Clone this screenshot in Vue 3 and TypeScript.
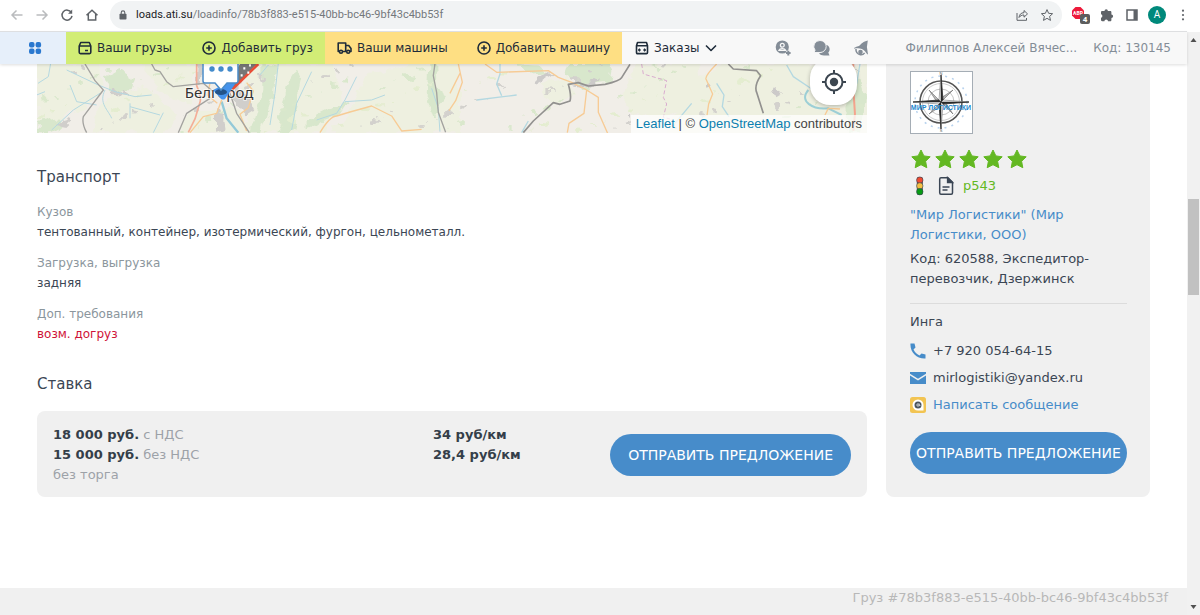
<script setup lang="ts">
import { ref } from 'vue'

interface Detail {
  label: string
  value: string
  alert?: boolean
}

interface Spot {
  x: number
  y: number
  size: number
  color: string
}

const address = ref('loads.ati.su/loadinfo/78b3f883-e515-40bb-bc46-9bf43c4bb53f')
const host = 'loads.ati.su'
const path = '/loadinfo/78b3f883-e515-40bb-bc46-9bf43c4bb53f'

const details: Detail[] = [
  { label: 'Кузов', value: 'тентованный, контейнер, изотермический, фургон, цельнометалл.' },
  { label: 'Загрузка, выгрузка', value: 'задняя' },
  { label: 'Доп. требования', value: 'возм. догруз', alert: true },
]

// Villages and groves scattered over the map
const spotColors = ['#d3d1cd', '#dae8cc', '#e4edd0']
const spots: Spot[] = Array.from({ length: 150 }, (_, i) => ({
  x: (i * 197) % 830,
  y: (i * 43) % 69,
  size: 1 + (i % 4),
  color: spotColors[i % 3],
}))
</script>

<template>
  <div class="window">
    <header class="browser">
      <button class="tool" aria-label="Назад">
        <svg width="14" height="14" viewBox="0 0 14 14" class="line faint"><path d="M12.500 7H2M6.500 2.500 2 7l4.500 4.500" /></svg>
      </button>
      <button class="tool" aria-label="Вперёд">
        <svg width="14" height="14" viewBox="0 0 14 14" class="line faint"><path d="M1.500 7H12M7.500 2.500 12 7l-4.500 4.500" /></svg>
      </button>
      <button class="tool" aria-label="Обновить">
        <svg width="14" height="14" viewBox="0 0 14 14" class="line"><path d="M11.300 4.500A5 5 0 1 0 12 7.800" /><path d="M12.200 1.500v4.200H8z" class="solid" stroke="none" /></svg>
      </button>
      <button class="tool" aria-label="Главная">
        <svg width="14" height="14" viewBox="0 0 14 14" class="line"><path d="M1.500 7.200 7 2.200l5.500 5M3.300 6v6h7.400V6" /></svg>
      </button>
      <div class="omnibox">
        <svg width="8" height="10" viewBox="0 0 8 10"><rect x=".5" y="3.800" width="7" height="5.700" rx=".8" fill="#5f6368" /><path d="M2.200 4V2.700a1.800 1.800 0 0 1 3.600 0V4" fill="none" stroke="#5f6368" stroke-width="1.100" /></svg>
        <a class="address" :href="'#' + address"><b>{{ host }}</b>{{ path }}</a>
        <button class="tool small" aria-label="Поделиться">
          <svg width="14" height="14" viewBox="0 0 14 14" class="line thin"><path d="M2 5v7.300h9.500V10M4 9.500c.3-3 2-4.800 5-4.800V2.500l3.500 3.400L9 9.200V7C6.700 7 5.200 7.800 4 9.500z" /></svg>
        </button>
        <button class="tool small" aria-label="В закладки">
          <svg width="14" height="14" viewBox="0 0 14 14" class="line thin"><path d="m7 1.600 1.600 3.700 4 .4-3 2.700.9 4L7 10.300l-3.500 2.100.9-4-3-2.700 4-.4z" /></svg>
        </button>
      </div>
      <div class="extensions">
        <button class="tool wide" aria-label="Блокировщик рекламы">
          <svg width="19" height="18" viewBox="0 0 19 18"><path d="M4.500 1h5L13 4.500v5L9.500 13h-5L1 9.500v-5z" fill="#ed1a3b" /><text x="7" y="9" font-size="5" font-weight="700" text-anchor="middle" fill="#fff">ABP</text><rect x="9" y="8" width="10" height="10" rx="2" fill="#5d5d5d" /><text x="14" y="16" font-size="8" font-weight="700" text-anchor="middle" fill="#fff">4</text></svg>
        </button>
        <button class="tool" aria-label="Расширения">
          <svg width="14" height="14" viewBox="0 0 14 14"><path d="M1 4.200C1 3.500 1.500 3 2.200 3h2.300a1.700 1.700 0 1 1 3.400 0h2.300c.7 0 1.200.5 1.200 1.200v2.300a1.700 1.700 0 1 1 0 3.400v2.300c0 .5-.5 1-1.200 1H8a1.800 1.800 0 0 0-3.600 0H2.200c-.7 0-1.200-.5-1.200-1.200V9.700a1.800 1.800 0 0 0 0-3.500z" fill="#5f6368" /></svg>
        </button>
        <button class="tool" aria-label="Боковая панель">
          <svg width="12" height="12" viewBox="0 0 12 12"><path d="M1 1h10v10H1z" fill="none" stroke="#5f6368" stroke-width="1.500" /><path d="M7.500 1H11v10H7.500z" fill="#5f6368" /></svg>
        </button>
        <button class="avatar">A</button>
        <button class="tool" aria-label="Меню">
          <svg width="4" height="12" viewBox="0 0 4 12" fill="#5f6368"><circle cx="2" cy="1.700" r="1.100" /><circle cx="2" cy="6" r="1.100" /><circle cx="2" cy="10.300" r="1.100" /></svg>
        </button>
      </div>
    </header>

    <div class="viewport">
      <div class="page">
        <nav class="nav">
          <a href="#apps" class="apps" aria-label="Сервисы">
            <svg width="14" height="14" viewBox="0 0 14 14" fill="#2a78cf"><rect x="1" y="1" width="5.500" height="5.500" rx="2" /><rect x="7.600" y="1" width="5.500" height="5.500" rx="2" /><rect x="1" y="7.600" width="5.500" height="5.500" rx="2" /><rect x="7.600" y="7.600" width="5.500" height="5.500" rx="2" /></svg>
          </a>
          <div class="tabs green">
            <a href="#loads">
              <svg width="14" height="14" viewBox="0 0 14 14" class="ink"><path d="M1.200 5 2.700 1.500h8.600L12.800 5v6.300c0 .8-.5 1.300-1.300 1.300h-9c-.8 0-1.300-.5-1.300-1.300zM1.200 5h11.600M7 9.500h3" /></svg>
              Ваши грузы
            </a>
            <a href="#add-load">
              <svg width="14" height="14" viewBox="0 0 14 14" class="ink"><circle cx="7" cy="7" r="6" /><path d="M7 4.200v5.600M4.200 7h5.600" /></svg>
              Добавить груз
            </a>
          </div>
          <div class="tabs yellow">
            <a href="#trucks">
              <svg width="15" height="14" viewBox="0 0 15 14" class="ink"><path d="M2.500 10.500H1.200V2h7.500v8.500H5.600M8.700 4.500h3l2.300 3v3h-1.200M8.700 10.500h1" /><circle cx="4" cy="10.800" r="1.500" /><circle cx="11.200" cy="10.800" r="1.500" /></svg>
              Ваши машины
            </a>
            <a href="#add-truck">
              <svg width="14" height="14" viewBox="0 0 14 14" class="ink"><circle cx="7" cy="7" r="6" /><path d="M7 4.200v5.600M4.200 7h5.600" /></svg>
              Добавить машину
            </a>
          </div>
          <a href="#orders" class="orders">
            <svg width="14" height="14" viewBox="0 0 14 14" class="ink"><path d="M1.500 4.800 2.500 1.500h9l1 3.300v6.700c0 .7-.4 1.100-1.100 1.100H2.600c-.7 0-1.100-.4-1.100-1.100zM1.500 4.800h11" /><path d="M3.300 9h2.700M8 9h2.700M4.800 7.700 3.500 9l1.300 1.300M9.200 7.700 10.500 9l-1.300 1.300" stroke-width="1.100" /></svg>
            Заказы
            <svg width="12" height="8" viewBox="0 0 12 8" class="ink"><path d="m1 1.500 5 5 5-5" /></svg>
          </a>
          <div class="account">
            <button class="tool gap" aria-label="Контакты">
              <svg width="16" height="16" viewBox="0 0 16 16"><circle cx="7.300" cy="7" r="6.600" fill="#848d97" /><circle cx="7.300" cy="5.200" r="1.900" fill="none" stroke="#f8f8f8" stroke-width="1.300" /><path d="M4 10.300c.8-2.300 5.800-2.300 6.600 0z" fill="none" stroke="#f8f8f8" stroke-width="1.300" /><path d="M13.300 10.800v4.600M11 13.100h4.600" stroke="#f8f8f8" stroke-width="3.400" /><path d="M13.300 10.800v4.600M11 13.100h4.600" stroke="#848d97" stroke-width="2" /></svg>
            </button>
            <button class="tool gap" aria-label="Сообщения">
              <svg width="18" height="16" viewBox="0 0 18 16" fill="#848d97"><path d="M12 4.500c4.600.5 6 5.300 3.300 8l1.200 3H11c-2.200 0-4-.8-5-2.200 3.500-.2 7.300-3.600 6-8.800z" /><path d="M7 .5a6.200 6 0 1 1 0 12H1l1.100-2.300A6.200 6 0 0 1 7 .5z" stroke="#f8f8f8" stroke-width=".9" /></svg>
            </button>
            <button class="tool" aria-label="Уведомления">
              <svg width="16" height="16" viewBox="0 0 16 16" fill="#848d97"><path d="M14.800.500 13.900 7l1.100 7.500c-1.500-.8-2-2-3-3.300-2.300-2.600-6-3.500-11-2.500C1.500 6.600 5 6.900 6.600 5.500 8.700 3.500 10 1.500 14.800.500z" /><path d="M3 9c-.4 2.500 1.300 5.200 4.300 5.700 2 .3 3.300-.4 4.300-1.800" fill="none" stroke="#848d97" stroke-width="1.500" /><circle cx="7.500" cy="12" r="2.300" /></svg>
            </button>
            <a href="#profile" class="user">Филиппов Алексей Вячес...</a>
            <span class="code">Код: 130145</span>
          </div>
        </nav>

        <main class="content">
          <div class="details">
            <div class="map">
              <svg class="tiles" viewBox="0 0 830 69" preserveAspectRatio="xMidYMid slice">
                <defs>
                  <filter id="rough" x="0" y="0" width="100%" height="100%">
                    <feTurbulence type="fractalNoise" baseFrequency=".07" numOctaves="3" seed="4" />
                    <feDisplacementMap in="SourceGraphic" scale="14" xChannelSelector="R" yChannelSelector="G" />
                  </filter>
                </defs>
                <rect width="830" height="69" fill="#f1eee8" />
                <g filter="url(#rough)">
                  <rect width="830" height="69" fill="#f1eee8" />
                  <g transform="translate(-7 -4) scale(.3333)">
                    <path d="M20 10h180l15 70-60 70-135 50zM230 110l120-30 90 80-40 60H180zM330 10h160l-10 130-90-50zM640 10h260l40 90-60 120H650zM1000 50l150-40h140v210H900l60-70zM490 150h140l30 70H450z" fill="#eef0e0" />
                    <path d="M222 55l40-25 50 30-10 30-60 10zM20 185l60-15 25 25-50 25H20zM700 10l40 10-10 80-40 120h-25l35-130zM770 70l30-50 20 40-30 150-50 10 15-80zM830 180l70-35 50-10-20 30-100 40zM1195 10h20l5 60 20 60-30 40-20-60z" fill="#d8e7cc" />
                    <path d="M245 105l10-18 22 12 8-12 8 20zM500 12h20l-5 70-18-15zM75 190l20-12 30 10-10 10zM555 145l20 5 10 60-30 8zM610 70l30 10 30 60-30 20-25-30z" fill="#d0cecb" />
                  </g>
                  <g transform="translate(413 -4) scale(.3333)">
                    <path d="M270 70l90-20 15 60-60 25zM560 12h190l15 90-70 65H560l-40-60zM710 90l100-80h260l20 210H650zM1000 12h260v210h-180z" fill="#eef0e0" />
                    <path d="M190 12l80 5 30 20-70 5zM360 12h130l-10 55-80 10-50-35zM600 15l30 10-10 15zM1190 65l40 5 15 40-15 110h-35z" fill="#d8e7cc" />
                    <path d="M245 70l20-20 35-20 12 10-20 10-20 15-20 12zM370 72l60-15 30 5-50 20zM765 75l15-5 5 15-15 5zM965 95l20-8 5 10-20 12zM540 155l10 5-10 15z" fill="#cccac9" />
                  </g>
                  <ellipse v-for="(spot, i) in spots" :key="i" :cx="spot.x" :cy="spot.y" :rx="spot.size" :ry="spot.size / 2" :fill="spot.color" />
                </g>
                <g transform="translate(-7 -4) scale(.3333)" fill="none" stroke-width="3" stroke-linejoin="round">
                  <path d="M24 70 55 50 62 10M20 105l25-10M110 30 205 75l50 20 60 15 50-5M120 75l20 50 60 10M300 130v45M300 140l90 25M225 90c-20 40 10 60 20 85M210 100 130 150 65 210M370 218l30-60M690 45l25-30M745 10l-10 90-15 95M845 35 800 130l-15 80M980 50l-35 70-25 40-60 20M945 125l80-5 40-15M1205 85l20 60 5 70" stroke="#b4d8e1" />
                  <path d="M575 125l15 50 35 43" stroke="#93c9d8" stroke-width="7" />
                  <path d="M575 120l-15 40-40 10-40 48M540 70l-8 35 30 25M650 68l20 25-15 50-25 20 20 50M870 218q30-50 50-50l40-12 65-18 60 30 30 45 60-5M1260 100l30-60" stroke="#f7cb95" stroke-width="4" />
                  <path d="M500 12v65q15 35 10 50l-15 50-20 40" stroke="#f4ae98" stroke-width="5" />
                  <path d="M165 12l30 50 25 28-60 80q-5 20 10 48M365 12l10 18 15 5 20 30 20 15 90-10 30 25M540 115l-70 45-25 58M600 100l20 60 38 58M1215 12l-5 35 10 50 5 60 22 60" stroke="#a3a29f" stroke-width="4" />
                  <path d="M600 95 680 12h-50l-30 50z" fill="#777" />
                  <path d="M600 95 685 12" stroke="#e84d36" stroke-width="8" />
                  <path d="M640 25h6M657 16h6M632 46h6M652 38h6" stroke="#fff" stroke-width="7" />
                </g>
                <g transform="translate(413 -4) scale(.3333)" fill="none" stroke-width="3" stroke-linejoin="round">
                  <path d="M150 12v30l-10 30 15 35M80 120l80-10 40-5M215 218l20-35M725 130l-50 60M800 70l22 35-5 35 20 30M1010 15l20 35 60 40 20 30M1230 12l-10 60" stroke="#b4d8e1" stroke-width="4" />
                  <path d="M1075 90c-30 35 15 60 60 55l40 20" stroke="#9dcfd6" stroke-width="6" />
                  <path d="M25 12l12 55-20 55-20 30M105 12l35 25 155-5 30 20 40 15 40 20 40 25v45l28 63M410 90l-8 70-45 30-5 28M800 12q-35 35-32 45l20 45-12 30-5 35M1125 165l10-20 35 2" stroke="#f7cb95" stroke-width="4" />
                  <path d="M220 218l30-35 60-55 20 5 30-10q5-15-5-50l30-5 30 10 50-5q45-10 50-20l25-40M835 12l15 15 70 5 12 15q-20 30-12 50l20 63" stroke="#92918f" stroke-width="5" />
                  <path d="M575 12l5 30 70 20-10 50 10 20-10 40 20 5" stroke="#d9abcf" stroke-dasharray="12 7" />
                  <path d="M1210 12v70l5 80-5 50" stroke="#f4a48d" stroke-width="6" />
                </g>
                <text x="182" y="34" text-anchor="middle" class="city">Белгород</text>
                <path d="M176 26l8 9q2 1 4 0l10-15-4-3z" fill="#4593ed" />
                <ellipse cx="184" cy="28" rx="6" ry="3" fill="#235389" />
                <path d="M166-5h35v22q0 2-2 2h-9l-6 7-6-7h-10q-2 0-2-2z" fill="#fff" stroke="#4b8cc8" stroke-width="1.500" />
                <g fill="#438bcb"><circle cx="175" cy="5" r="2.700" /><circle cx="184" cy="5" r="2.700" /><circle cx="193" cy="5" r="2.700" /></g>
              </svg>
              <button class="locate" aria-label="Моё местоположение">
                <svg width="24" height="24" viewBox="0 0 24 24" fill="none" stroke="#3c4650" stroke-width="2"><circle cx="12" cy="12" r="8.500" /><circle cx="12" cy="12" r="4.200" fill="#3c4650" stroke="none" /><path d="M12 0v4M12 20v4M0 12h4M20 12h4" /></svg>
              </button>
              <div class="credit"><a href="#leaflet">Leaflet</a> | © <a href="#osm">OpenStreetMap</a> contributors</div>
            </div>

            <section class="transport">
              <h2>Транспорт</h2>
              <dl>
                <div v-for="item in details" :key="item.label">
                  <dt>{{ item.label }}</dt>
                  <dd :class="{ alert: item.alert }">{{ item.value }}</dd>
                </div>
              </dl>
            </section>

            <section class="payment">
              <h2>Ставка</h2>
              <div class="rates">
                <div class="sums">
                  <p><strong>18 000 руб.</strong> с НДС</p>
                  <p><strong>15 000 руб.</strong> без НДС</p>
                  <p>без торга</p>
                </div>
                <div class="per-km">
                  <p><strong>34 руб/км</strong></p>
                  <p><strong>28,4 руб/км</strong></p>
                </div>
                <button class="offer">Отправить предложение</button>
              </div>
            </section>
          </div>

          <aside class="firm">
            <svg class="logo" width="63" height="63" viewBox="0 0 63 63">
              <rect x=".5" y=".5" width="62" height="62" fill="#fff" stroke="#a5adb5" />
              <g fill="none" stroke="#555">
                <circle cx="31" cy="31" r="26" stroke="#b9d3ee" stroke-width="1.500" stroke-dasharray="2 5" />
                <circle cx="31" cy="31" r="21" stroke-width="1.500" />
                <circle cx="31" cy="31" r="18.500" stroke="#aaa" stroke-width=".6" />
                <circle cx="31" cy="31" r="13" stroke="#aaa" stroke-width=".7" />
                <path d="M31 31 19 19l8 12zM31 31l12-12-12 8zM31 31 19 43l12-8zM31 31l12 12-8-12z" fill="#bbb" stroke-width=".5" />
              </g>
              <path d="M31 4l2 25 26 2-26 2-2 25-2-25-26-2 26-2z" fill="#fff" stroke="#555" stroke-width=".5" />
              <path d="M31 4v27l2-2zM59 31H31l2 2zM31 58V31l-2 2zM3 31h28l-2-2z" fill="#292929" stroke="#292929" stroke-width=".6" />
              <text x="31" y="39" class="logo-name">МИР ЛОГИСТИКИ</text>
              <g class="compass"><text x="31" y="4">N</text><text x="31" y="61">S</text></g>
            </svg>
            <div class="stars" role="img" aria-label="Рейтинг 5 из 5">
              <svg v-for="n in 5" :key="n" width="22" height="22" viewBox="0 0 22 22"><path d="m11 2 2.900 5.900 6.300.9-4.600 4.500 1.200 6.400L11 16.700l-5.800 3 1.200-6.400L1.800 8.800l6.300-.9z" fill="#63b822" stroke="#63b822" stroke-width="1" stroke-linejoin="round" /></svg>
            </div>
            <div class="score">
              <svg width="20" height="20" viewBox="0 0 20 20"><rect x="6.800" y="1" width="6" height="18" rx="2" fill="#3b4654" /><circle cx="9.800" cy="4.100" r="3.200" fill="#f04b32" stroke="#3b4654" stroke-width=".6" /><circle cx="9.800" cy="9.900" r="3.200" fill="#f5c043" stroke="#3b4654" stroke-width=".6" /><circle cx="9.800" cy="15.700" r="3.200" fill="#079c13" stroke="#3b4654" stroke-width=".6" /></svg>
              <svg width="16" height="20" viewBox="0 0 16 20" fill="none" stroke="#3b4654" stroke-width="1.500"><path d="M3 1.700h6.800l4.700 4.700v10.400c0 .8-.5 1.500-1.300 1.500H3c-.8 0-1.300-.7-1.300-1.500V3.200c0-.8.5-1.500 1.300-1.500zM4.500 11h7M4.500 14h5" /><path d="M9.600 1.700v4.900h4.900z" fill="#3b4654" /></svg>
              <a href="#passport">p543</a>
            </div>
            <a href="#firm" class="firm-name">"Мир Логистики" (Мир Логистики, ООО)</a>
            <p class="firm-code">Код: 620588, Экспедитор-перевозчик, Дзержинск</p>
            <hr />
            <p>Инга</p>
            <ul class="contacts">
              <li>
                <svg width="16" height="16" viewBox="0 0 16 16"><path d="M.5.500h4l1 4-2 2C5 9.500 6.500 11 9.500 12.500l2-2 4 1v4C7 16.200-.2 9 .5.500z" fill="#478cc9" /></svg>
                <span>+7 920 054-64-15</span>
              </li>
              <li>
                <svg width="16" height="14" viewBox="0 0 16 14"><path d="M0 1h16v1.800L8 7.700 0 2.800zM0 4.600l8 4.800 8-4.800V13H0z" fill="#478cc9" /></svg>
                <span>mirlogistiki@yandex.ru</span>
              </li>
              <li>
                <svg width="16" height="16" viewBox="0 0 16 16"><rect width="16" height="16" rx="2.500" fill="#f2c452" /><path d="M8 2.500a5.500 5.500 0 0 1 5.500 5.500v5.500H8A5.500 5.500 0 0 1 8 2.500z" fill="#fff" /><circle cx="8" cy="8" r="3.500" fill="#4a545f" /><circle cx="8" cy="8" r="1.200" fill="none" stroke="#fff" stroke-width=".7" /><path d="M9.300 6.500v2q.8 1 1-.5" fill="none" stroke="#fff" stroke-width=".5" /></svg>
                <a href="#message">Написать сообщение</a>
              </li>
            </ul>
            <button class="offer">Отправить предложение</button>
          </aside>
        </main>

        <footer class="footer">Груз #78b3f883-e515-40bb-bc46-9bf43c4bb53f</footer>
      </div>

      <div class="scrollbar" aria-hidden="true">
        <svg width="7" height="4" viewBox="0 0 7 4"><path d="M3.500 0 6.500 4h-6z" fill="#505050" /></svg>
        <div class="thumb"></div>
        <svg width="7" height="4" viewBox="0 0 7 4"><path d="M3.500 4 .5 0h6z" fill="#505050" /></svg>
      </div>
    </div>
  </div>
</template>

<style>
body {
  margin: 0;
}
</style>

<style scoped>
.window {
  display: flex;
  flex-direction: column;
  min-height: 100vh;
  background: #fff;
  color: #3b4654;
  font: 13px/20px "DejaVu Sans", sans-serif;
}
p, h2, dl, dd, ul {
  margin: 0;
  padding: 0;
}
a {
  color: #478cc9;
  text-decoration: none;
}
button {
  border: 0;
  padding: 0;
  background: none;
  font: inherit;
  cursor: pointer;
}
svg {
  flex: none;
}
.line {
  fill: none;
  stroke: #5f6368;
  stroke-width: 1.500;
}
.line.faint {
  stroke: #babcbe;
}
.line.thin {
  stroke-width: 1;
}
.solid {
  fill: #5f6368;
}
.ink {
  fill: none;
  stroke: #1f2c3a;
  stroke-width: 1.600;
  stroke-linejoin: round;
}
.tool {
  display: flex;
  align-items: center;
  justify-content: center;
  width: 25px;
  height: 24px;
  flex: none;
}

.browser {
  display: flex;
  align-items: center;
  box-sizing: border-box;
  height: 32px;
  padding: 0 5px 3px 4px;
  font-family: Roboto, sans-serif;
}
.omnibox {
  display: flex;
  align-items: center;
  flex: 1;
  height: 28px;
  margin-left: 6px;
  padding: 0 1px 0 9px;
  border-radius: 14px;
  background: #f1f3f4;
}
.omnibox .small + .small {
  margin-right: 2px;
}
.address {
  flex: 1;
  margin-left: 9px;
  color: #74787c;
  font-size: 11px;
}
.address b {
  color: #202124;
  font-weight: 400;
}
.extensions {
  display: flex;
  align-items: center;
  margin-left: 6px;
}
.extensions .wide {
  margin-right: 1px;
}
.avatar {
  width: 18px;
  height: 18px;
  margin: 0 4px;
  border-radius: 50%;
  background: #00897b;
  color: #fff;
  font-size: 10px;
  line-height: 18px;
}

.viewport {
  display: flex;
  flex: 1;
}
.page {
  display: flex;
  flex-direction: column;
  flex: 1;
  min-width: 0;
}
.nav {
  display: flex;
  position: relative;
  z-index: 1;
  height: 32px;
  background: #f8f8f8;
  box-shadow: 0 -1px 0 #dedfe1, 0 1px 3px #0002;
  font-size: 12px;
}
.nav a {
  display: flex;
  align-items: center;
  gap: 5px;
  color: #1f2c3a;
  white-space: nowrap;
}
.nav .apps {
  justify-content: center;
  width: 66px;
  padding-left: 4px;
  box-sizing: border-box;
  background: #e6effa;
}
.tabs {
  display: flex;
  justify-content: space-between;
  box-sizing: border-box;
  padding: 0 12px;
}
.green {
  width: 259px;
  background: #d2ed76;
}
.yellow {
  width: 297px;
  background: #fedf83;
}
.orders {
  padding-left: 13px;
}
.account {
  display: flex;
  align-items: center;
  margin-left: auto;
  padding-right: 16px;
  color: #848d97;
}
.gap {
  margin-right: 14px;
}
.nav .user {
  margin: 0 16px 0 32px;
  color: #848d97;
}

.content {
  display: grid;
  grid-template-columns: minmax(0, 1fr) 264px;
  gap: 19px;
  padding: 0 37px;
}
.map {
  position: relative;
  height: 69px;
  overflow: hidden;
}
.tiles {
  display: block;
  width: 100%;
  height: 100%;
}
.city {
  fill: #333;
  stroke: #fff9;
  stroke-width: 2px;
  paint-order: stroke;
  font: 15px "Noto Sans", sans-serif;
}
.locate {
  display: flex;
  align-items: center;
  justify-content: center;
  position: absolute;
  right: 10px;
  bottom: 28px;
  width: 47px;
  height: 47px;
  border-radius: 20px;
  background: #fff;
  box-shadow: 0 1px 4px #0004;
}
.credit {
  position: absolute;
  right: 0;
  bottom: 0;
  padding: 0 5px;
  background: #fffb;
  color: #444;
  font: 13px/18px "Liberation Sans", Arial, sans-serif;
}
.credit a {
  color: #0b7fb0;
}
.transport {
  padding-top: 32px;
}
h2 {
  font-size: 15px;
  line-height: 24px;
  font-weight: 400;
}
dl {
  display: grid;
  gap: 11px;
  padding-top: 13px;
  font-size: 12px;
}
dt {
  color: #8b969d;
}
.alert {
  color: #cf1238;
}
.payment {
  padding-top: 28px;
}
.rates {
  display: flex;
  margin-top: 15px;
  padding: 14px 16px 12px;
  border-radius: 8px;
  background: #f0f0f0;
}
.sums {
  flex: 0 0 380px;
  color: #9da2a8;
}
.rates strong {
  color: #343e49;
}
.offer {
  height: 42px;
  border-radius: 21px;
  background: #478cca;
  color: #fff;
  font-size: 14px;
  text-transform: uppercase;
  white-space: nowrap;
}
.rates .offer {
  align-self: center;
  margin-left: auto;
  padding: 0 18px;
}

.firm {
  display: flex;
  flex-direction: column;
  box-sizing: border-box;
  padding: 7px 23px 23px 24px;
  border-radius: 0 0 8px 8px;
  background: #f0f0f0;
}
.logo-name {
  fill: #2187cf;
  font: bold 7px "Liberation Sans", sans-serif;
  text-anchor: middle;
}
.compass {
  fill: #555;
  font: 4px "Liberation Sans", sans-serif;
  text-anchor: middle;
}
.stars {
  display: flex;
  gap: 2px;
  margin-top: 14px;
}
.score {
  display: flex;
  align-items: center;
  height: 22px;
  margin-top: 5px;
}
.score svg + svg {
  margin: 0 9px 0 8px;
}
.score a {
  color: #63b822;
}
.firm-name {
  margin-top: 8px;
}
.firm-code {
  margin-top: 4px;
}
hr {
  width: 100%;
  margin: 14px 0 8px;
  border: 0;
  border-top: 1px solid #dcdcdc;
}
.contacts {
  display: grid;
  gap: 7px;
  margin: 9px 0 17px;
  list-style: none;
}
.contacts li {
  display: flex;
  align-items: center;
  gap: 7px;
}

.footer {
  box-sizing: border-box;
  height: 27px;
  margin-top: auto;
  padding-right: 19px;
  background: #f0f0f0;
  color: #b8b8b8;
  text-align: right;
}
.scrollbar {
  display: flex;
  flex-direction: column;
  align-items: center;
  justify-content: space-between;
  box-sizing: border-box;
  width: 13px;
  padding: 6px 0;
  background: #f1f1f1;
}
.thumb {
  width: 11px;
  height: 96px;
  margin: 0 0 154px;
  background: #c1c1c1;
}
</style>
